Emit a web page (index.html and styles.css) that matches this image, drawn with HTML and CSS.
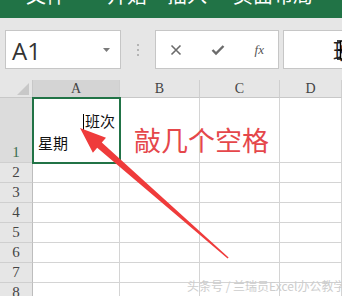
FILE: index.html
```html
<!DOCTYPE html>
<html lang="zh">
<head>
    <meta charset="UTF-8">
    <meta name="viewport" content="width=device-width, initial-scale=1.0">
    <title>Excel</title>
    <link rel="stylesheet" href="styles.css">
</head>
<body>
    <div class="ribbon">
        <span class="tab tab-file">文件</span>
        <span class="tab tab-home">开始</span>
        <span class="tab tab-insert">插入</span>
        <span class="tab tab-layout">页面布局</span>
    </div>

    <div class="toolbar">
        <div class="name-box">
            <span>A1</span>
            <svg class="drop" width="7" height="4" viewBox="0 0 7 4"><path d="M0 0 L7 0 L3.5 4 Z" fill="#7a7a7a"/></svg>
        </div>
        <div class="grip">
            <i></i><i></i><i></i>
        </div>
        <div class="fx-buttons">
            <svg width="12" height="12" viewBox="0 0 12 12"><path d="M1.5 1.5 L10.5 10.5 M10.5 1.5 L1.5 10.5" stroke="#6b6b6b" stroke-width="1.6"/></svg>
            <svg width="14" height="12" viewBox="0 0 14 12"><path d="M1.5 6 L5 9.5 L12.5 2" stroke="#6b6b6b" stroke-width="2.4" fill="none"/></svg>
            <span class="fx">fx</span>
        </div>
        <div class="formula">
            <span>班次</span>
            <svg class="ibeam" width="9" height="20" viewBox="0 0 9 20"><path d="M1 1 H8 M4.5 1 V19 M1 19 H8 M2 10 H7" stroke="#000" stroke-width="1.5" fill="none"/></svg>
        </div>
    </div>

    <div class="sheet">
        <div class="corner"><span class="tri"></span></div>
        <div class="col-head active">A</div>
        <div class="col-head">B</div>
        <div class="col-head">C</div>
        <div class="col-head">D</div>

        <div class="row-head tall active">1</div>
        <div class="cell tall selected">
            <div class="line-one"><span class="caret"></span>班次</div>
            <div class="line-two">星期</div>
        </div>
        <div class="cell tall"></div>
        <div class="cell tall"></div>
        <div class="cell tall"></div>

        <div class="row-head">2</div><div class="cell"></div><div class="cell"></div><div class="cell"></div><div class="cell"></div>
        <div class="row-head">3</div><div class="cell"></div><div class="cell"></div><div class="cell"></div><div class="cell"></div>
        <div class="row-head">4</div><div class="cell"></div><div class="cell"></div><div class="cell"></div><div class="cell"></div>
        <div class="row-head">5</div><div class="cell"></div><div class="cell"></div><div class="cell"></div><div class="cell"></div>
        <div class="row-head">6</div><div class="cell"></div><div class="cell"></div><div class="cell"></div><div class="cell"></div>
        <div class="row-head">7</div><div class="cell"></div><div class="cell"></div><div class="cell"></div><div class="cell"></div>
        <div class="row-head">8</div><div class="cell"></div><div class="cell"></div><div class="cell"></div><div class="cell"></div>
    </div>

    <div class="note">敲几个空格</div>

    <svg class="arrow" width="342" height="296" viewBox="0 0 342 296">
        <path d="M80 128 L106 137.7 L101.8 142.6 L228.6 257.6 L227.6 258.4 L97.2 147.8 L92.9 152.7 Z" fill="#ef3b3b"/>
    </svg>

    <div class="watermark">头条号 / 兰瑞员Excel办公教学</div>
</body>
</html>
```

FILE: styles.css
```css
body {
    margin: 0;
    padding: 0;
    width: 342px;
    height: 296px;
    overflow: hidden;
    position: relative;
    background: #fff;
    font-family: "Noto Sans CJK SC", "Liberation Sans", sans-serif;
}

.ribbon {
    height: 18px;
    background: #217346;
    color: #fff;
    font-size: 20px;
    line-height: 20px;
    overflow: hidden;
    position: relative;
}

.tab {
    position: absolute;
    top: -15px;
}

.tab-file { left: 26px; }
.tab-home { left: 107px; }
.tab-insert { left: 167px; }
.tab-layout { left: 233px; }

.toolbar {
    height: 62px;
    background: #e6e6e6;
    display: flex;
    align-items: flex-start;
    padding: 12px 0 0 5px;
    box-sizing: border-box;
    overflow: hidden;
}

.toolbar > div {
    flex-shrink: 0;
}

.name-box {
    width: 116px;
    height: 39px;
    box-sizing: border-box;
    background: #fff;
    border: 1px solid #c6c6c6;
    display: flex;
    align-items: center;
    justify-content: space-between;
    padding: 0 10px 0 6px;
    font-family: "Open Sans", "Liberation Sans", sans-serif;
    font-size: 24px;
    color: #333;
}

.name-box span {
    margin-top: 2px;
}

.grip {
    width: 34px;
    height: 39px;
    display: flex;
    flex-direction: column;
    align-items: center;
    justify-content: center;
    gap: 3px;
}

.grip i {
    width: 2px;
    height: 2px;
    background: #b4b4b4;
}

.fx-buttons {
    width: 124px;
    height: 39px;
    box-sizing: border-box;
    background: #fff;
    border: 1px solid #c6c6c6;
    display: flex;
    align-items: center;
    justify-content: space-between;
    padding: 0 14px 0 14px;
}

.fx {
    font-family: "Liberation Serif", serif;
    font-style: italic;
    font-size: 13px;
    color: #555;
}

.formula {
    margin-left: 4px;
    width: 80px;
    height: 39px;
    box-sizing: border-box;
    background: #fff;
    border: 1px solid #c6c6c6;
    padding-left: 49px;
    font-size: 22px;
    line-height: 37px;
    color: #222;
    white-space: nowrap;
    overflow: hidden;
    position: relative;
}

.ibeam {
    position: absolute;
    left: 52px;
    top: 9px;
}

.sheet {
    display: grid;
    grid-template-columns: 33px 87px 80px 80px 62px;
    grid-template-rows: 18px 65px repeat(7, 20px);
}

.corner {
    background: #e6e6e6;
    border-right: 1px solid #c8c8c8;
    border-bottom: 1px solid #c8c8c8;
    position: relative;
}

.tri {
    position: absolute;
    right: 3px;
    bottom: 2px;
    width: 0;
    height: 0;
    border-left: 12px solid transparent;
    border-bottom: 12px solid #c8c8c8;
}

.col-head {
    background: #e6e6e6;
    border-right: 1px solid #cfcfcf;
    border-bottom: 1px solid #c8c8c8;
    font-family: "Liberation Serif", serif;
    font-size: 14px;
    line-height: 18px;
    text-align: center;
    color: #444;
}

.col-head.active {
    background: #d4d4d4;
}

.row-head {
    background: #e6e6e6;
    border-right: 1px solid #bdbdbd;
    border-bottom: 1px solid #cfcfcf;
    font-family: "Liberation Serif", serif;
    font-size: 15px;
    line-height: 19px;
    text-align: center;
    color: #444;
}

.row-head.tall {
    display: flex;
    align-items: flex-end;
    justify-content: center;
}

.row-head.active {
    background: #dcdcdc;
    color: #3b6e4f;
}

.cell {
    border-right: 1px solid #d4d4d4;
    border-bottom: 1px solid #d4d4d4;
}

.cell.selected {
    outline: 2px solid #217346;
    outline-offset: -1px;
    position: relative;
    font-size: 15px;
    line-height: 22px;
    color: #111;
    padding-top: 12px;
}

.line-one {
    text-align: right;
    padding-right: 4px;
}

.caret {
    display: inline-block;
    width: 1px;
    height: 16px;
    background: #000;
    vertical-align: -3px;
    margin-right: 1px;
}

.line-two {
    padding-left: 5px;
}

.note {
    position: absolute;
    left: 134px;
    top: 122px;
    font-size: 27px;
    line-height: 36px;
    color: #e5474b;
}

.arrow {
    position: absolute;
    left: 0;
    top: 0;
}

.watermark {
    position: absolute;
    left: 187px;
    top: 278px;
    font-size: 12px;
    line-height: 16px;
    color: #cdcdcd;
    white-space: nowrap;
}
```
